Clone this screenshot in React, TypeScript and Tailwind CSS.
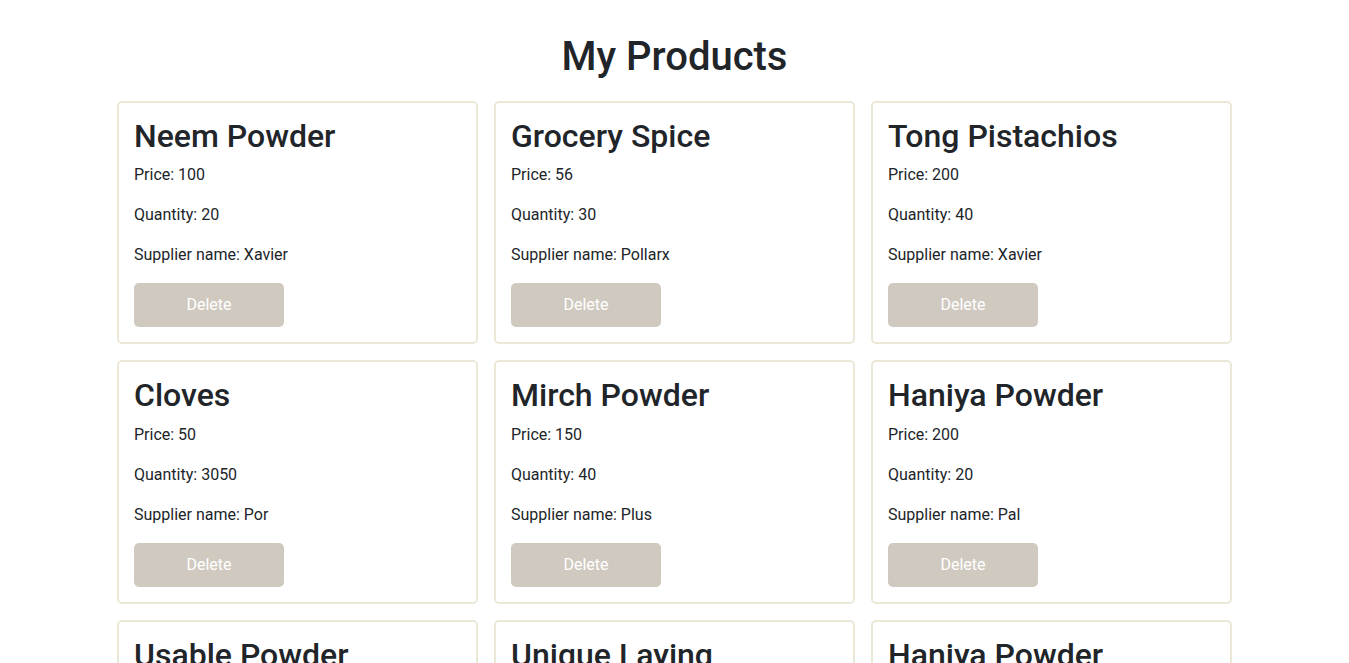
import React from 'react'

interface Product {
  name: string
  price: number
  quantity: number
  supplier: string
}

const products: Product[] = [
  { name: 'Neem Powder', price: 100, quantity: 20, supplier: 'Xavier' },
  { name: 'Grocery Spice', price: 56, quantity: 30, supplier: 'Pollarx' },
  { name: 'Tong Pistachios', price: 200, quantity: 40, supplier: 'Xavier' },
  { name: 'Cloves', price: 50, quantity: 3050, supplier: 'Por' },
  { name: 'Mirch Powder', price: 150, quantity: 40, supplier: 'Plus' },
  { name: 'Haniya Powder', price: 200, quantity: 20, supplier: 'Pal' },
  { name: 'Usable Powder', price: 120, quantity: 10, supplier: 'Xavier' },
  { name: 'Unique Laying', price: 80, quantity: 25, supplier: 'Pollarx' },
  { name: 'Haniya Powder', price: 200, quantity: 20, supplier: 'Pal' },
]

function ProductCard({ product }: { product: Product }) {
  const { name, price, quantity, supplier } = product
  return (
    <div className="border-2 border-[#ece8d8] rounded-[5px] pt-[14px] px-[15px] pb-[15px] bg-white">
      <h2 className="text-[32px] leading-[1.2] font-medium mb-2">{name}</h2>
      <p className="mb-4">Price: {price}</p>
      <p className="mb-4">Quantity: {quantity}</p>
      <p className="mb-4">Supplier name: {supplier}</p>
      <button className="w-[150px] h-[44px] rounded-[5px] bg-[#d0c9bf] text-white text-base">
        Delete
      </button>
    </div>
  )
}

export default function App() {
  return (
    <div className="min-h-screen bg-white text-[#212529] text-base leading-6 font-['Roboto',sans-serif]">
      <h1 className="text-[40px] leading-[1.2] font-medium text-center pt-[33px] mb-[20px]">My Products</h1>
      <div className="w-[1115px] mx-auto grid grid-cols-3 gap-4">
        {products.map((p, i) => (
          <ProductCard key={i} product={p} />
        ))}
      </div>
    </div>
  )
}
